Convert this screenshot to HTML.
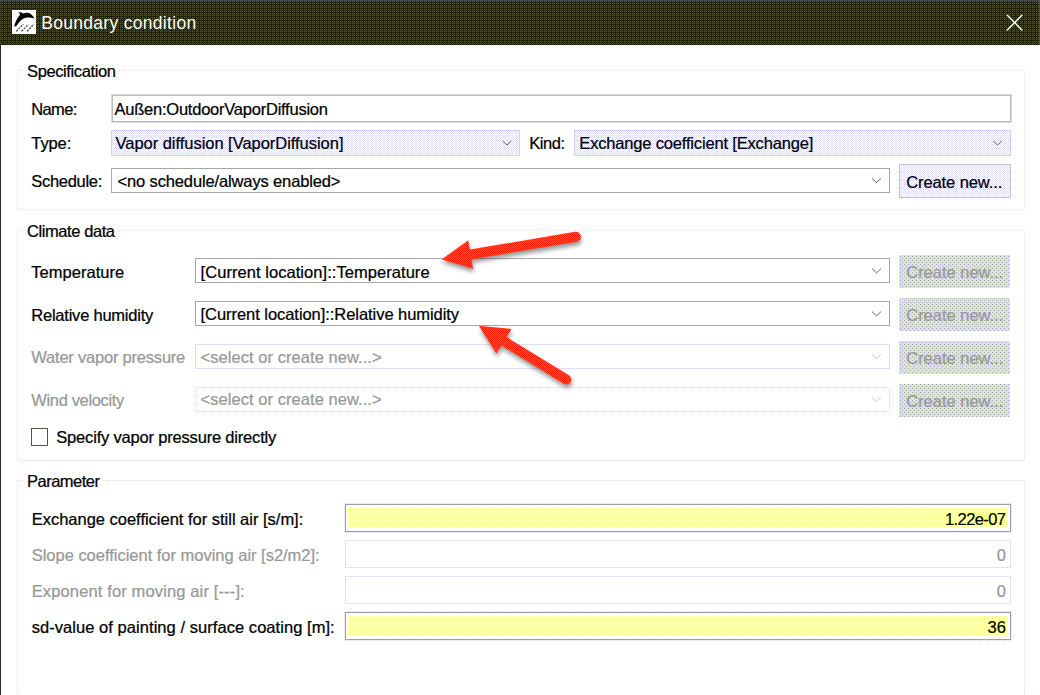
<!DOCTYPE html>
<html lang="en"><head><meta charset="utf-8"><title>Boundary condition</title>
<style>
html,body{margin:0;padding:0;background:#fff;}
body{width:1040px;height:695px;position:relative;overflow:hidden;font-family:"Liberation Sans",sans-serif;}
svg.bg{position:absolute;left:0;top:0;}
.t{-webkit-text-stroke:0.24px currentColor;position:absolute;white-space:pre;font-family:"Liberation Sans",sans-serif;}

</style></head>
<body>
<svg class="bg" width="1040" height="695" viewBox="0 0 1040 695">
<defs>
<pattern id="tb" width="4" height="4" patternUnits="userSpaceOnUse"><rect width="4" height="4" fill="#222200"/><path fill="#4e4e62" d="M1 2h1v1h-1zM0 1h1v1h-1zM2 1h1v1h-1zM0 3h1v1h-1zM2 3h1v1h-1z"/></pattern>
<pattern id="lav" width="4" height="4" patternUnits="userSpaceOnUse"><rect width="4" height="4" fill="#fff"/><path fill="#dcdcff" d="M0 0h1v1h-1zM2 0h1v1h-1zM1 1h1v1h-1zM3 1h1v1h-1zM0 2h1v1h-1zM1 3h1v1h-1zM3 3h1v1h-1z"/></pattern>
<pattern id="dis" width="4" height="4" patternUnits="userSpaceOnUse"><rect width="4" height="4" fill="#dcdcff"/><path fill="#acac8c" d="M0 0h1v1h-1zM2 2h1v1h-1z"/></pattern>
<pattern id="yel" width="2" height="2" patternUnits="userSpaceOnUse"><rect width="2" height="2" fill="#fff"/><rect width="1" height="1" fill="#fffc94"/></pattern>
<pattern id="red" width="2" height="2" patternUnits="userSpaceOnUse"><rect width="2" height="2" fill="#ff1e00"/><path fill="#ff4858" d="M1 0h1v1h-1zM0 1h1v1h-1z"/></pattern>
<filter id="sh" x="-20%" y="-20%" width="140%" height="160%"><feGaussianBlur stdDeviation="1.9"/></filter>
</defs>
<g shape-rendering="crispEdges">
<rect x="0" y="0" width="1040" height="45" fill="url(#tb)"/>
<rect x="0" y="0" width="1040" height="1" fill="#46465a"/>
<rect x="1039" y="0" width="1" height="45" fill="#4e4e62"/>
<rect x="0" y="45" width="1" height="650" fill="#2a2a28"/>
<rect x="12" y="10" width="24" height="24" fill="#fff"/>
</g>
<g transform="translate(12,10)"><path fill="#000" d="M2.2 16.4 C3 13 4.6 8.6 8 4.8 L6.6 2.1 C8.6 2.4 10 2.9 11.3 3.4 C13.5 2.6 15.6 2.6 17.4 3.2 C19.8 4.2 21.5 6.2 22.3 8.6 C20.8 8.0 19.8 7.8 18.6 7.8 C15.8 7.0 13 7.5 10.8 8.9 C8.4 10.2 6.6 12.6 5 15.2 C4.2 16.2 3.2 16.6 2.2 16.4Z"/><g stroke="#44444c" stroke-width="1.3" stroke-dasharray="2 1.1" fill="none"><path d="M4.3 21.2 L11.4 14.2"/><path d="M9.6 21.2 L16.4 14.4"/><path d="M15.1 21.2 L21.9 14.2"/></g></g>
<g stroke="#fff" stroke-width="1.4" stroke-linecap="round"><path d="M1007.3 15.3 L1021.9 29.9"/><path d="M1021.9 15.3 L1007.3 29.9"/></g>
<g shape-rendering="crispEdges">
<g stroke="#dedeff" stroke-width="1" stroke-dasharray="1 1" fill="none"><path d="M17 70.5H1025"/><path d="M17 209.5H1025"/><path d="M17.5 70V210"/><path d="M1024.5 70V210"/></g>
<rect x="24" y="70" width="95" height="1" fill="#fff"/>
<g stroke="#dedeff" stroke-width="1" stroke-dasharray="1 1" fill="none"><path d="M17 230.5H1025"/><path d="M17 460.5H1025"/><path d="M17.5 230V461"/><path d="M1024.5 230V461"/></g>
<rect x="24" y="230" width="94" height="1" fill="#fff"/>
<g stroke="#dedeff" stroke-width="1" stroke-dasharray="1 1" fill="none"><path d="M17 480.5H1025"/><path d="M17.5 480V721"/><path d="M1024.5 480V721"/></g>
<rect x="24" y="480" width="79" height="1" fill="#fff"/>
<rect x="111.5" y="94.5" width="900" height="28" fill="none" stroke="#d6d6ea" stroke-width="1"/>
<rect x="112.5" y="95.5" width="898" height="26" fill="#fff" stroke="#bcbcb8" stroke-width="1"/>
<rect x="111.5" y="130.5" width="408" height="25" fill="url(#lav)" stroke="#d0d0f0" stroke-width="1"/>
<rect x="574.5" y="130.5" width="436" height="25" fill="url(#lav)" stroke="#d0d0f0" stroke-width="1"/>
<rect x="111.5" y="168.5" width="778" height="24" fill="#fff" stroke="#a8a8a3" stroke-width="1"/>
<rect x="899.5" y="164.5" width="111" height="33" fill="url(#lav)" stroke="#c4c4e0" stroke-width="1"/>
<rect x="195.5" y="258.5" width="694" height="24" fill="#fff" stroke="#a8a8a3" stroke-width="1"/>
<rect x="195.5" y="301.5" width="694" height="24" fill="#fff" stroke="#a8a8a3" stroke-width="1"/>
<rect x="195.5" y="344.5" width="694" height="24" fill="#fff" stroke="#dcdcff" stroke-width="1"/>
<g stroke="#d4d4ff" stroke-width="1" stroke-dasharray="1 1" fill="none"><path d="M195 387.5H890"/><path d="M195 411.5H890"/><path d="M195.5 387V412"/><path d="M889.5 387V412"/></g>
<rect x="899" y="255" width="111" height="33" fill="url(#dis)"/>
<rect x="899" y="298" width="111" height="33" fill="url(#dis)"/>
<rect x="899" y="341" width="111" height="33" fill="url(#dis)"/>
<rect x="899" y="384" width="111" height="33" fill="url(#dis)"/>
<rect x="31.5" y="428.5" width="16" height="17" fill="#fff" stroke="#55554e" stroke-width="1"/>
<g stroke="#dcdcff" stroke-width="1" stroke-dasharray="1 1" fill="none"><path d="M344 503.5H1012"/><path d="M344 532.5H1012"/><path d="M344.5 503V533"/><path d="M1011.5 503V533"/></g>
<rect x="345.5" y="504.5" width="665" height="27" fill="#fff" stroke="#9d9da5" stroke-width="1"/>
<rect x="348" y="508" width="660" height="20" fill="url(#yel)"/>
<rect x="345.5" y="540.5" width="665" height="27" fill="#fff" stroke="#e0e0ff" stroke-width="1"/>
<rect x="345.5" y="576.5" width="665" height="27" fill="#fff" stroke="#e0e0ff" stroke-width="1"/>
<g stroke="#dcdcff" stroke-width="1" stroke-dasharray="1 1" fill="none"><path d="M344 611.5H1012"/><path d="M344 640.5H1012"/><path d="M344.5 611V641"/><path d="M1011.5 611V641"/></g>
<rect x="345.5" y="612.5" width="665" height="27" fill="#fff" stroke="#9d9da5" stroke-width="1"/>
<rect x="348" y="616" width="660" height="20" fill="url(#yel)"/>
</g>
<path d="M502.6 140.9 L507 145.1 L511.4 140.9" fill="none" stroke="#5c5c70" stroke-width="1"/>
<path d="M993.1 140.9 L997.5 145.1 L1001.9 140.9" fill="none" stroke="#5c5c70" stroke-width="1"/>
<path d="M872.1 178.4 L876.5 182.6 L880.9 178.4" fill="none" stroke="#5c5c70" stroke-width="1"/>
<path d="M872.1 268.7 L876.5 272.90000000000003 L880.9 268.7" fill="none" stroke="#5c5c70" stroke-width="1"/>
<path d="M872.1 311.7 L876.5 315.90000000000003 L880.9 311.7" fill="none" stroke="#5c5c70" stroke-width="1"/>
<path d="M872.1 354.4 L876.5 358.6 L880.9 354.4" fill="none" stroke="#c4c4d4" stroke-width="1"/>
<path d="M872.1 397.4 L876.5 401.6 L880.9 397.4" fill="none" stroke="#c4c4d4" stroke-width="1"/>
<path d="M441.60 259.40 L473.10 268.81 L471.52 259.44 L576.83 241.73 A5.0 5.0 0 0 0 575.17 231.87 L469.86 249.58 L468.29 240.21 Z" fill="#55555a" opacity="0.6" transform="translate(0.8,3.4)" filter="url(#sh)"/>
<path d="M441.60 259.40 L473.10 268.81 L471.52 259.44 L576.83 241.73 A5.0 5.0 0 0 0 575.17 231.87 L469.86 249.58 L468.29 240.21 Z" fill="url(#red)"/>
<path d="M478.80 325.80 L496.34 353.60 L501.31 345.51 L563.68 383.86 A5.0 5.0 0 0 0 568.92 375.34 L506.55 336.99 L511.52 328.90 Z" fill="#55555a" opacity="0.6" transform="translate(0.8,3.4)" filter="url(#sh)"/>
<path d="M478.80 325.80 L496.34 353.60 L501.31 345.51 L563.68 383.86 A5.0 5.0 0 0 0 568.92 375.34 L506.55 336.99 L511.52 328.90 Z" fill="url(#red)"/>
</svg>
<span class="t" style="-webkit-text-stroke:0;top:15.49px;color:#fff;font-size:17.5px;line-height:17.5px;letter-spacing:0.304px;left:41.20px;">Boundary condition</span>
<span class="t" style="top:63.23px;color:#000;font-size:16.5px;line-height:16.5px;letter-spacing:-0.380px;left:27.00px;">Specification</span>
<span class="t" style="top:100.73px;color:#000;font-size:16.5px;line-height:16.5px;letter-spacing:-0.652px;left:31.30px;">Name:</span>
<span class="t" style="top:134.73px;color:#000;font-size:16.5px;line-height:16.5px;letter-spacing:-0.090px;left:31.30px;">Type:</span>
<span class="t" style="top:173.03px;color:#000;font-size:16.5px;line-height:16.5px;letter-spacing:-0.299px;left:31.30px;">Schedule:</span>
<span class="t" style="top:101.03px;color:#000;font-size:16.5px;line-height:16.5px;letter-spacing:-0.232px;left:114.50px;">Außen:OutdoorVaporDiffusion</span>
<span class="t" style="top:134.78px;color:#000;font-size:16.5px;line-height:16.5px;letter-spacing:-0.033px;left:115.50px;">Vapor diffusion [VaporDiffusion]</span>
<span class="t" style="top:173.03px;color:#000;font-size:16.5px;line-height:16.5px;letter-spacing:-0.133px;left:117.50px;">&lt;no schedule/always enabled&gt;</span>
<span class="t" style="top:134.73px;color:#000;font-size:16.5px;line-height:16.5px;letter-spacing:-0.402px;left:529.20px;">Kind:</span>
<span class="t" style="top:134.73px;color:#000;font-size:16.5px;line-height:16.5px;letter-spacing:-0.170px;left:579.30px;">Exchange coefficient [Exchange]</span>
<span class="t" style="top:174.23px;color:#000;font-size:16.5px;line-height:16.5px;letter-spacing:-0.103px;left:906.25px;">Create new...</span>
<span class="t" style="top:222.78px;color:#000;font-size:16.5px;line-height:16.5px;letter-spacing:-0.422px;left:27.00px;">Climate data</span>
<span class="t" style="top:264.03px;color:#000;font-size:16.5px;line-height:16.5px;letter-spacing:0.036px;left:31.30px;">Temperature</span>
<span class="t" style="top:306.53px;color:#000;font-size:16.5px;line-height:16.5px;letter-spacing:-0.228px;left:31.30px;">Relative humidity</span>
<span class="t" style="top:349.03px;color:#989898;font-size:16.5px;line-height:16.5px;letter-spacing:-0.212px;left:31.30px;">Water vapor pressure</span>
<span class="t" style="top:391.53px;color:#989898;font-size:16.5px;line-height:16.5px;letter-spacing:-0.350px;left:31.30px;">Wind velocity</span>
<span class="t" style="top:263.53px;color:#000;font-size:16.5px;line-height:16.5px;letter-spacing:0.052px;left:200.60px;">[Current location]::Temperature</span>
<span class="t" style="top:306.03px;color:#000;font-size:16.5px;line-height:16.5px;letter-spacing:-0.054px;left:200.60px;">[Current location]::Relative humidity</span>
<span class="t" style="top:348.53px;color:#989898;font-size:16.5px;line-height:16.5px;letter-spacing:0.051px;left:200.60px;">&lt;select or create new...&gt;</span>
<span class="t" style="top:391.03px;color:#989898;font-size:16.5px;line-height:16.5px;letter-spacing:0.051px;left:200.60px;">&lt;select or create new...&gt;</span>
<span class="t" style="top:264.03px;color:#989898;font-size:16.5px;line-height:16.5px;letter-spacing:-0.020px;left:906.25px;">Create new...</span>
<span class="t" style="top:306.53px;color:#989898;font-size:16.5px;line-height:16.5px;letter-spacing:-0.020px;left:906.25px;">Create new...</span>
<span class="t" style="top:349.53px;color:#989898;font-size:16.5px;line-height:16.5px;letter-spacing:-0.020px;left:906.25px;">Create new...</span>
<span class="t" style="top:392.53px;color:#989898;font-size:16.5px;line-height:16.5px;letter-spacing:-0.020px;left:906.25px;">Create new...</span>
<span class="t" style="top:428.53px;color:#000;font-size:16.5px;line-height:16.5px;letter-spacing:-0.187px;left:56.30px;">Specify vapor pressure directly</span>
<span class="t" style="top:472.93px;color:#000;font-size:16.5px;line-height:16.5px;letter-spacing:-0.504px;left:27.00px;">Parameter</span>
<span class="t" style="top:511.13px;color:#000;font-size:16.5px;line-height:16.5px;letter-spacing:-0.012px;left:31.70px;">Exchange coefficient for still air [s/m]:</span>
<span class="t" style="top:547.03px;color:#989898;font-size:16.5px;line-height:16.5px;letter-spacing:-0.015px;left:31.70px;">Slope coefficient for moving air [s2/m2]:</span>
<span class="t" style="top:583.23px;color:#989898;font-size:16.5px;line-height:16.5px;letter-spacing:0.135px;left:31.70px;">Exponent for moving air [---]:</span>
<span class="t" style="top:619.03px;color:#000;font-size:16.5px;line-height:16.5px;letter-spacing:0.052px;left:31.70px;">sd-value of painting / surface coating [m]:</span>
<span class="t" style="top:511.13px;color:#000;font-size:16.5px;line-height:16.5px;letter-spacing:-0.592px;right:34.59px;">1.22e-07</span>
<span class="t" style="top:547.03px;color:#989898;font-size:16.5px;line-height:16.5px;letter-spacing:0.000px;right:34.00px;">0</span>
<span class="t" style="top:583.23px;color:#989898;font-size:16.5px;line-height:16.5px;letter-spacing:0.000px;right:34.00px;">0</span>
<span class="t" style="top:619.03px;color:#000;font-size:16.5px;line-height:16.5px;letter-spacing:0.141px;right:33.86px;">36</span>
</body></html>
